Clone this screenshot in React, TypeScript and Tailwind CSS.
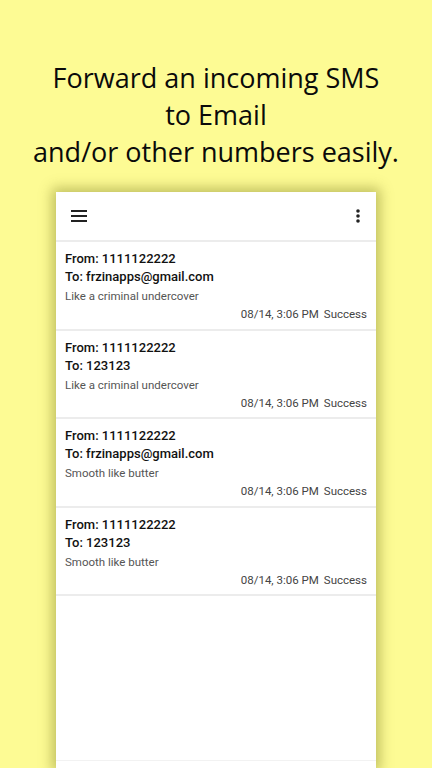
import { FC } from 'react'

type Msg = { from: string; to: string; body: string }

const messages: Msg[] = [
  { from: '1111122222', to: 'frzinapps@gmail.com', body: 'Like a criminal undercover' },
  { from: '1111122222', to: '123123', body: 'Like a criminal undercover' },
  { from: '1111122222', to: 'frzinapps@gmail.com', body: 'Smooth like butter' },
  { from: '1111122222', to: '123123', body: 'Smooth like butter' },
]

const MenuIcon: FC = () => (
  <svg width="16" height="12" viewBox="0 0 16 12" fill="#222">
    <rect x="0" y="0" width="16" height="2" />
    <rect x="0" y="5" width="16" height="2" />
    <rect x="0" y="10" width="16" height="2" />
  </svg>
)

const DotsIcon: FC = () => (
  <svg width="4" height="14" viewBox="0 0 4 14" fill="#222">
    <circle cx="2" cy="2" r="1.8" />
    <circle cx="2" cy="7" r="1.8" />
    <circle cx="2" cy="12" r="1.8" />
  </svg>
)

const Row: FC<{ m: Msg }> = ({ m }) => (
  <div className="flex h-[88.5px] flex-col border-b-2 border-[#ececec] px-[9px] pt-[8px]">
    <div className="text-[13px] font-medium leading-[18px] text-[#111]">From: {m.from}</div>
    <div className="text-[13px] font-medium leading-[18px] text-[#111]">To: {m.to}</div>
    <div className="mt-[1px] text-[11.5px] leading-[18px] text-[#555]">{m.body}</div>
    <div className="flex justify-end gap-[5px] text-[11.5px] leading-[18px] text-[#444]">
      <span>08/14, 3:06 PM</span>
      <span>Success</span>
    </div>
  </div>
)

export default function App() {
  return (
    <div className="flex h-[768px] w-[432px] flex-col overflow-hidden bg-[#fdfb94]">
      <h1
        className="pt-[59px] text-center text-[27px] font-medium leading-[37px] text-[#0a0a0a]"
        style={{ fontFamily: '"Open Sans", sans-serif' }}
      >
        Forward an incoming SMS
        <br />
        to Email
        <br />
        and/or other numbers easily.
      </h1>
      <div
        className="mx-auto mt-[22px] flex w-[320px] flex-1 flex-col bg-white shadow-[0_0_12px_4px_rgba(120,120,30,0.45)]"
        style={{ fontFamily: 'Roboto, sans-serif' }}
      >
        <div className="flex h-[50px] items-center justify-between border-b-2 border-[#ececec] pl-[15px] pr-[16px]">
          <MenuIcon />
          <DotsIcon />
        </div>
        {messages.map((m, i) => (
          <Row key={i} m={m} />
        ))}
        <div className="flex-1" />
        <div className="h-[8px] border-t border-[#f2f2f2]" />
      </div>
    </div>
  )
}
